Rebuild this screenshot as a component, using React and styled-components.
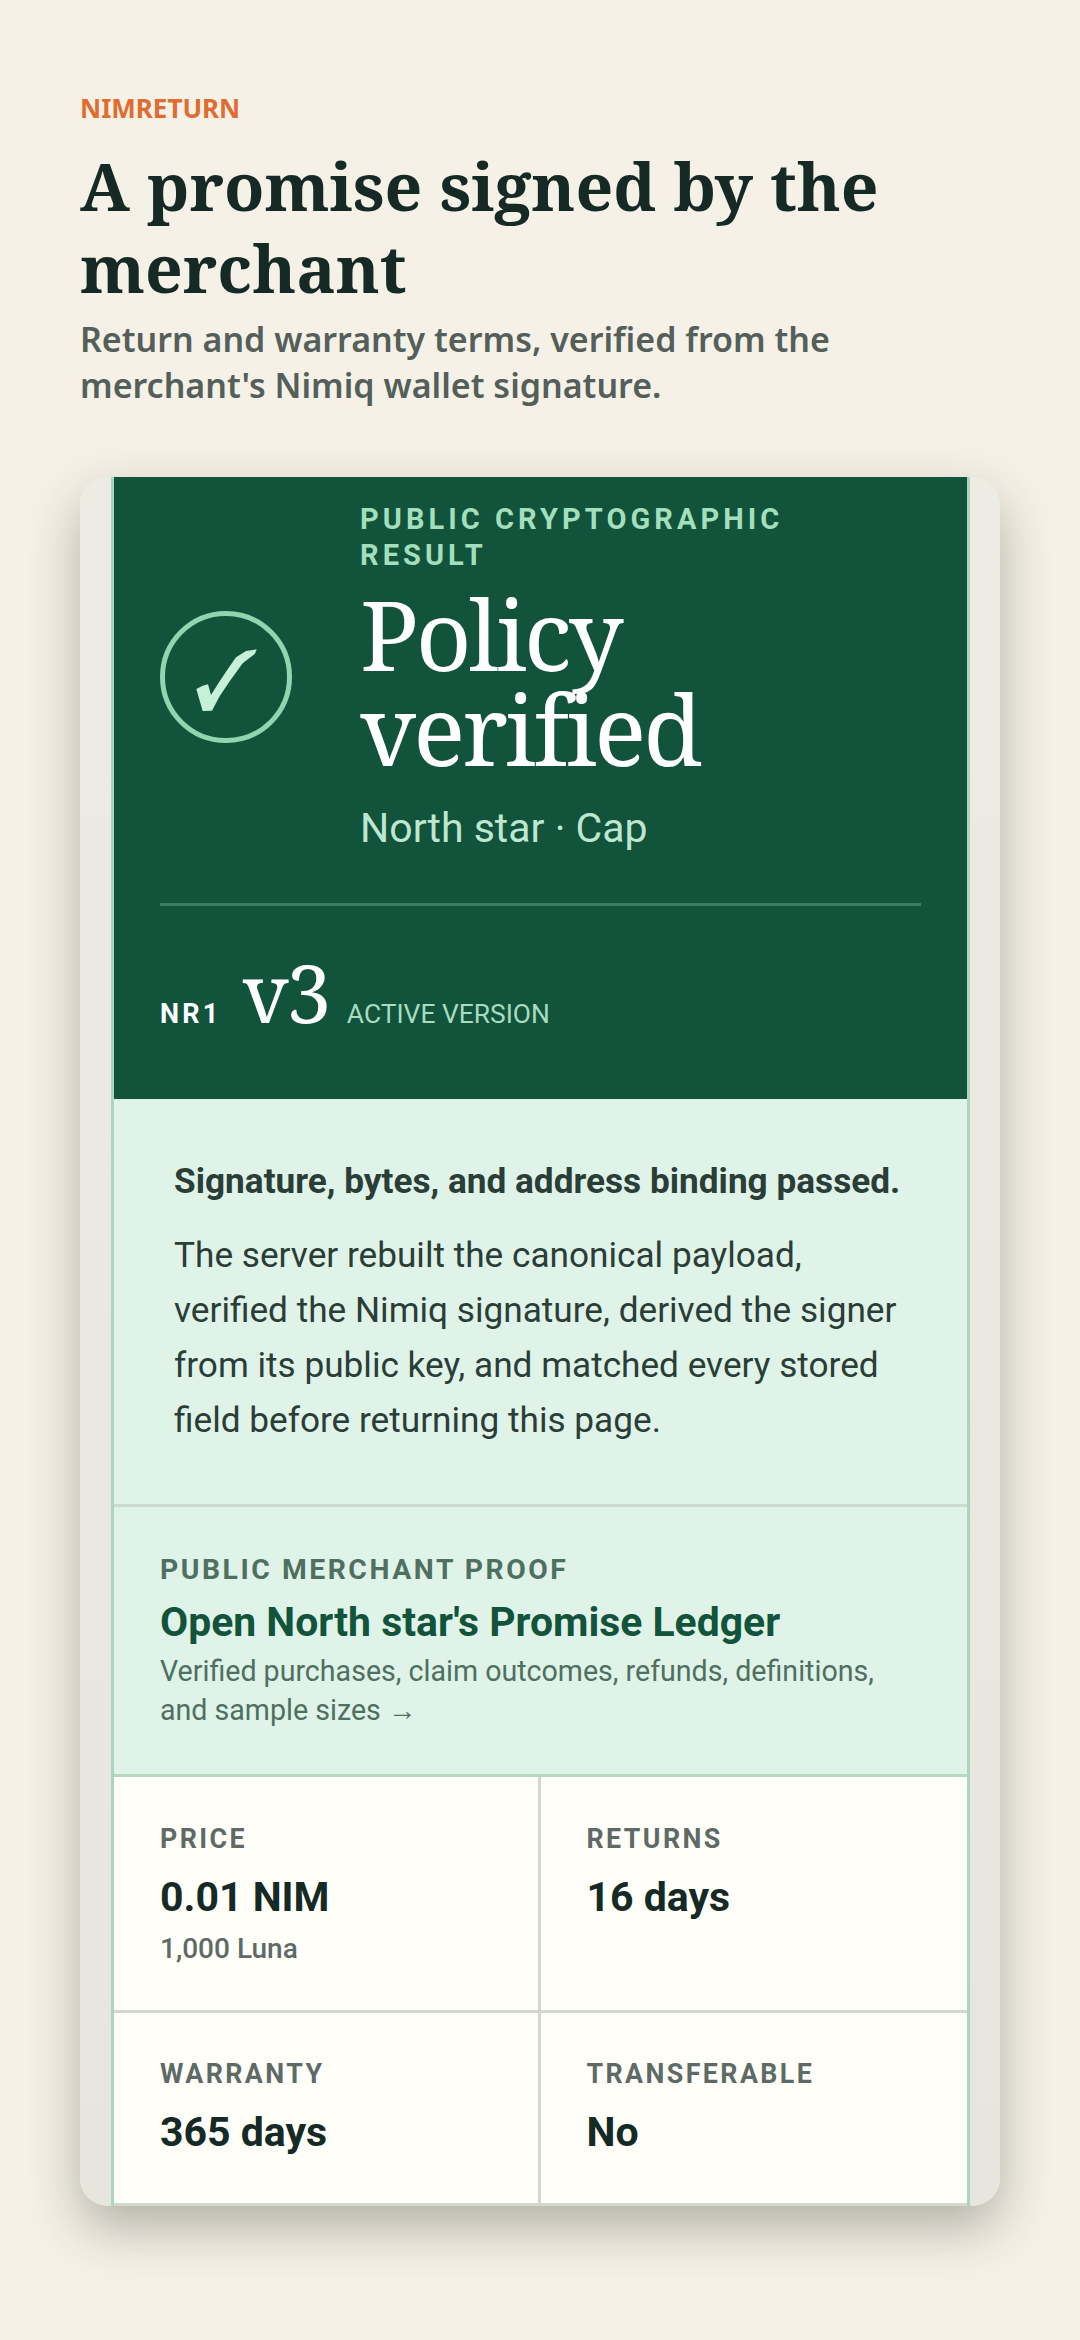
import React from 'react'
import styled, { createGlobalStyle } from 'styled-components'

const serif = `"Noto Serif", "Liberation Serif", serif`
const sans = `"Noto Sans", sans-serif`
const roboto = `Roboto, sans-serif`

const GlobalStyle = createGlobalStyle`
  html, body {
    margin: 0;
    padding: 0;
    background: #f5f1e7;
  }
  * {
    box-sizing: border-box;
  }
`

const Page = styled.main`
  width: 1080px;
  height: 2340px;
  padding: 92px 80px 0;
  overflow: hidden;
  background: #f5f1e7;
`

const Brand = styled.div`
  font-family: ${sans};
  font-size: 26px;
  line-height: 32px;
  font-weight: 700;
  color: #e06c2f;
`

const Heading = styled.h1`
  margin: 20px 0 0;
  font-family: ${serif};
  font-size: 66px;
  line-height: 82px;
  font-weight: 700;
  color: #152925;
`

const Lead = styled.p`
  margin: 8px 0 0;
  font-family: ${sans};
  font-size: 34px;
  line-height: 46px;
  font-weight: 600;
  color: #545f5a;
`

const Card = styled.section`
  margin-top: 69px;
  width: 920px;
  height: 1729px;
  padding: 0 30px 0 31px;
  border-radius: 28px;
  overflow: hidden;
  background: linear-gradient(#ecebe4, #e6e6df);
  box-shadow: 0 22px 52px rgba(40, 44, 30, 0.32);
`

const Inner = styled.div`
  height: 100%;
  display: flex;
  flex-direction: column;
  border-left: 3px solid #a9d6bd;
  border-right: 3px solid #a9d6bd;
  background: #fffef9;
`

const Hero = styled.div`
  height: 622px;
  padding: 24px 46px 0;
  background: #12533b;
`

const HeroTop = styled.div`
  display: flex;
  align-items: center;
  gap: 68px;
`

const Ring = styled.div`
  flex: none;
  width: 132px;
  height: 132px;
  display: flex;
  align-items: center;
  justify-content: center;
  border: 5px solid #8fd6b0;
  border-radius: 50%;
`

const CheckMark = () => (
  <svg width="80" height="80" viewBox="0 -9 240 240" aria-hidden="true">
    <path
      fill="#c6f0d9"
      d="M31 147 L50 137 L66 133 L75 165 L100 125 L125 88 L150 52 L180 33 L212 28 L207 41 L170 70 L130 125 L100 170 L78 212 L50 213 L42 185 Z"
    />
  </svg>
)

const HeroText = styled.div`
  flex: 1;
`

const Kicker = styled.div`
  font-family: ${roboto};
  font-size: 29px;
  line-height: 36px;
  font-weight: 700;
  letter-spacing: 0.14em;
  color: #a3dfbd;
`

const Title = styled.h2`
  margin: 13px 0 0;
  font-family: ${serif};
  font-size: 97px;
  line-height: 95px;
  font-weight: 400;
  letter-spacing: -0.03em;
  color: #ffffff;
`

const Merchant = styled.div`
  margin-top: 28px;
  font-family: ${roboto};
  font-size: 41px;
  line-height: 48px;
  color: #bfe6d0;
`

const Divider = styled.hr`
  margin: 51px 0 0;
  border: 0;
  height: 3px;
  background: rgba(163, 223, 189, 0.3);
`

const VersionRow = styled.div`
  margin-top: 40px;
  display: flex;
  align-items: baseline;
  gap: 18px;
`

const Standard = styled.span`
  margin-right: 3px;
  font-family: ${roboto};
  font-size: 27px;
  font-weight: 700;
  letter-spacing: 0.12em;
  color: #ffffff;
`

const Version = styled.span`
  font-family: ${serif};
  font-size: 80px;
  line-height: 92px;
  letter-spacing: -0.03em;
  color: #ffffff;
`

const VersionNote = styled.span`
  font-family: ${roboto};
  font-size: 26.4px;
  color: #a8dcc0;
`

const Summary = styled.div`
  height: 408px;
  padding: 62px 60px 0;
  background: #dff3e8;
  border-bottom: 3px solid #ced9d0;
`

const SummaryLead = styled.div`
  font-family: ${roboto};
  font-size: 35.2px;
  line-height: 40px;
  font-weight: 700;
  color: #2a3d36;
`

const SummaryText = styled.p`
  margin: 27px 0 0;
  font-family: ${roboto};
  font-size: 35.2px;
  line-height: 55px;
  color: #2a3d36;
`

const Proof = styled.div`
  height: 270px;
  padding: 46px 46px 0;
  background: #dff3e8;
  border-bottom: 3px solid #b5d8c3;
`

const ProofLabel = styled.div`
  font-family: ${roboto};
  font-size: 28.3px;
  line-height: 34px;
  font-weight: 700;
  letter-spacing: 0.09em;
  color: #4f6f60;
`

const ProofTitle = styled.div`
  margin-top: 11px;
  font-family: ${roboto};
  font-size: 40.9px;
  line-height: 48px;
  font-weight: 700;
  color: #12533b;
`

const ProofText = styled.div`
  margin-top: 6px;
  font-family: ${roboto};
  font-size: 28.6px;
  line-height: 39px;
  color: #4f6f60;
`

const Facts = styled.div`
  flex: 1;
  display: grid;
  grid-template-columns: 1fr 1fr;
  grid-template-rows: 236px 1fr;
  border-bottom: 3px solid #d2d8cf;
`

const Fact = styled.div`
  padding: ${({ $bottom }) => ($bottom ? '45px' : '46px')} 46px 0;
  border-right: ${({ $last }) => ($last ? '0' : '3px solid #d2d8cf')};
  border-bottom: ${({ $bottom }) => ($bottom ? '0' : '3px solid #d2d8cf')};
`

const FactLabel = styled.div`
  font-family: ${roboto};
  font-size: 26.8px;
  line-height: 32px;
  font-weight: 700;
  letter-spacing: 0.09em;
  color: #5d6a66;
`

const FactValue = styled.div`
  margin-top: 18px;
  font-family: ${roboto};
  font-size: 41px;
  line-height: 48px;
  font-weight: 700;
  color: #152925;
`

const FactNote = styled.div`
  margin-top: 11px;
  font-family: ${roboto};
  font-size: 28px;
  line-height: 34px;
  font-weight: 500;
  color: #5d6a66;
`

const App = () => (
  <Page>
    <GlobalStyle />
    <Brand>NIMRETURN</Brand>
    <Heading>A promise signed by the merchant</Heading>
    <Lead>
      Return and warranty terms, verified from the merchant's Nimiq wallet signature.
    </Lead>
    <Card>
      <Inner>
        <Hero>
          <HeroTop>
            <Ring>
              <CheckMark />
            </Ring>
            <HeroText>
              <Kicker>PUBLIC CRYPTOGRAPHIC RESULT</Kicker>
              <Title>
                Policy
                <br />
                verified
              </Title>
              <Merchant>North star · Cap</Merchant>
            </HeroText>
          </HeroTop>
          <Divider />
          <VersionRow>
            <Standard>NR1</Standard>
            <Version>v3</Version>
            <VersionNote>ACTIVE VERSION</VersionNote>
          </VersionRow>
        </Hero>
        <Summary>
          <SummaryLead>Signature, bytes, and address binding passed.</SummaryLead>
          <SummaryText>
            The server rebuilt the canonical payload, verified the Nimiq signature, derived the
            signer from its public key, and matched every stored field before returning this page.
          </SummaryText>
        </Summary>
        <Proof>
          <ProofLabel>PUBLIC MERCHANT PROOF</ProofLabel>
          <ProofTitle>Open North star's Promise Ledger</ProofTitle>
          <ProofText>
            Verified purchases, claim outcomes, refunds, definitions, and sample sizes →
          </ProofText>
        </Proof>
        <Facts>
          <Fact>
            <FactLabel>PRICE</FactLabel>
            <FactValue>0.01 NIM</FactValue>
            <FactNote>1,000 Luna</FactNote>
          </Fact>
          <Fact $last>
            <FactLabel>RETURNS</FactLabel>
            <FactValue>16 days</FactValue>
          </Fact>
          <Fact $bottom>
            <FactLabel>WARRANTY</FactLabel>
            <FactValue>365 days</FactValue>
          </Fact>
          <Fact $last $bottom>
            <FactLabel>TRANSFERABLE</FactLabel>
            <FactValue>No</FactValue>
          </Fact>
        </Facts>
      </Inner>
    </Card>
  </Page>
)

export default App
